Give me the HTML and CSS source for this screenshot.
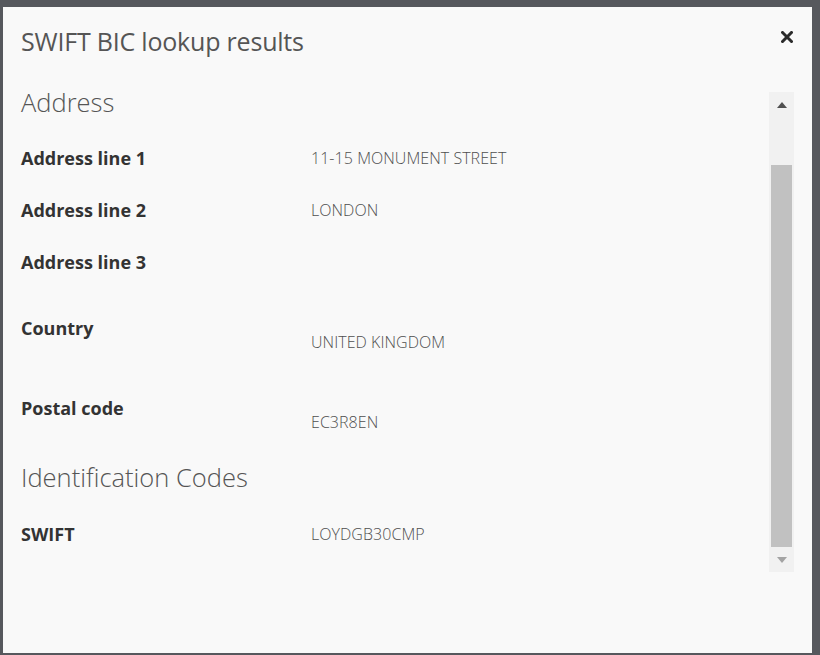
FILE: index.html
```html
<!DOCTYPE html>
<html lang="en">
<head>
<meta charset="utf-8">
<title>SWIFT BIC lookup results</title>
<link rel="stylesheet" href="styles.css">
</head>
<body>
<div class="backdrop">
  <div class="modal">
    <div class="modal-header">
      <h1 class="modal-title">SWIFT BIC lookup results</h1>
      <button class="close" aria-label="Close">
        <svg width="12" height="12" viewBox="0 0 12 12"><path d="M1.5 1.5 L10.5 10.5 M10.5 1.5 L1.5 10.5" stroke="#2b2b2b" stroke-width="3" stroke-linecap="square"/></svg>
      </button>
    </div>
    <div class="modal-body">
      <div class="content">
        <h2 class="section">Address</h2>
        <div class="row"><div class="label">Address line 1</div><div class="value">11-15 MONUMENT STREET</div></div>
        <div class="row"><div class="label">Address line 2</div><div class="value">LONDON</div></div>
        <div class="row row-last"><div class="label">Address line 3</div><div class="value"></div></div>
        <div class="row row-offset row-gap"><div class="label">Country</div><div class="value">UNITED KINGDOM</div></div>
        <div class="row row-offset"><div class="label">Postal code</div><div class="value">EC3R8EN</div></div>
        <h2 class="section section-2">Identification Codes</h2>
        <div class="row"><div class="label">SWIFT</div><div class="value">LOYDGB30CMP</div></div>
      </div>
      <div class="scrollbar">
        <div class="sb-btn"><span class="arrow-up"></span></div>
        <div class="sb-track"><div class="sb-thumb"></div></div>
        <div class="sb-btn"><span class="arrow-down"></span></div>
      </div>
    </div>
  </div>
</div>
</body>
</html>
```
FILE: styles.css
```css
html, body {
  margin: 0;
  padding: 0;
}
body {
  background: #56585d;
  font-family: "Open Sans", "Noto Sans", sans-serif;
  width: 820px;
  height: 655px;
  overflow: hidden;
}
.backdrop {
  padding: 7px 8px 0 3px;
}
.modal {
  width: 809px;
  height: 646px;
  background: #f9f9f9;
  box-sizing: border-box;
}
.modal-header {
  display: flex;
  justify-content: space-between;
  align-items: flex-start;
  padding: 0 19px 0 18px;
  height: 73px;
}
.modal-title {
  margin: 0;
  padding-top: 18px;
  font-size: 25px;
  line-height: 32px;
  font-weight: 400;
  color: #555;
  letter-spacing: -0.2px;
}
.close {
  border: 0;
  background: none;
  padding: 0;
  margin-top: 24px;
  width: 12px;
  height: 12px;
  display: block;
}
.close svg { display: block; }
.modal-body {
  display: flex;
  height: 520px;
}
.content {
  flex: 1;
  padding: 7px 0 0 18px;
}
.section {
  margin: 0 0 29px;
  font-size: 25.5px;
  line-height: 30px;
  font-weight: 300;
  color: #555;
  letter-spacing: 0;
}
.section-2 {
  margin-top: 28px;
  margin-bottom: 30px;
}
.row {
  display: flex;
  margin-bottom: 28px;
}
.row-last { margin-bottom: 0; }
.row-gap { margin-top: 42px; }
.row.row-offset { margin-bottom: 0; }
.row.row-offset + .row.row-offset { margin-top: 42px; }
.label {
  width: 290px;
  flex: none;
  font-size: 18px;
  line-height: 24px;
  font-weight: 700;
  color: #333;
  letter-spacing: 0;
}
.value {
  font-size: 16px;
  line-height: 24px;
  font-weight: 300;
  color: #4f4f4f;
  letter-spacing: 0.05px;
  min-height: 24px;
}
.row-offset .value { margin-top: 14px; }
.scrollbar {
  width: 25px;
  height: 480px;
  margin: 12px 18px 0 0;
  background: #f1f1f1;
  display: flex;
  flex-direction: column;
}
.sb-btn {
  height: 25px;
  display: flex;
  align-items: center;
  justify-content: center;
  flex: none;
}
.sb-track {
  flex: 1;
  padding: 48px 2px 0;
}
.sb-thumb {
  height: 382px;
  background: #c1c1c1;
}
.arrow-up, .arrow-down {
  width: 0;
  height: 0;
  border-left: 5.5px solid transparent;
  border-right: 5.5px solid transparent;
}
.arrow-up { border-bottom: 6px solid #505050; }
.arrow-down { border-top: 6px solid #a3a3a3; }
```
